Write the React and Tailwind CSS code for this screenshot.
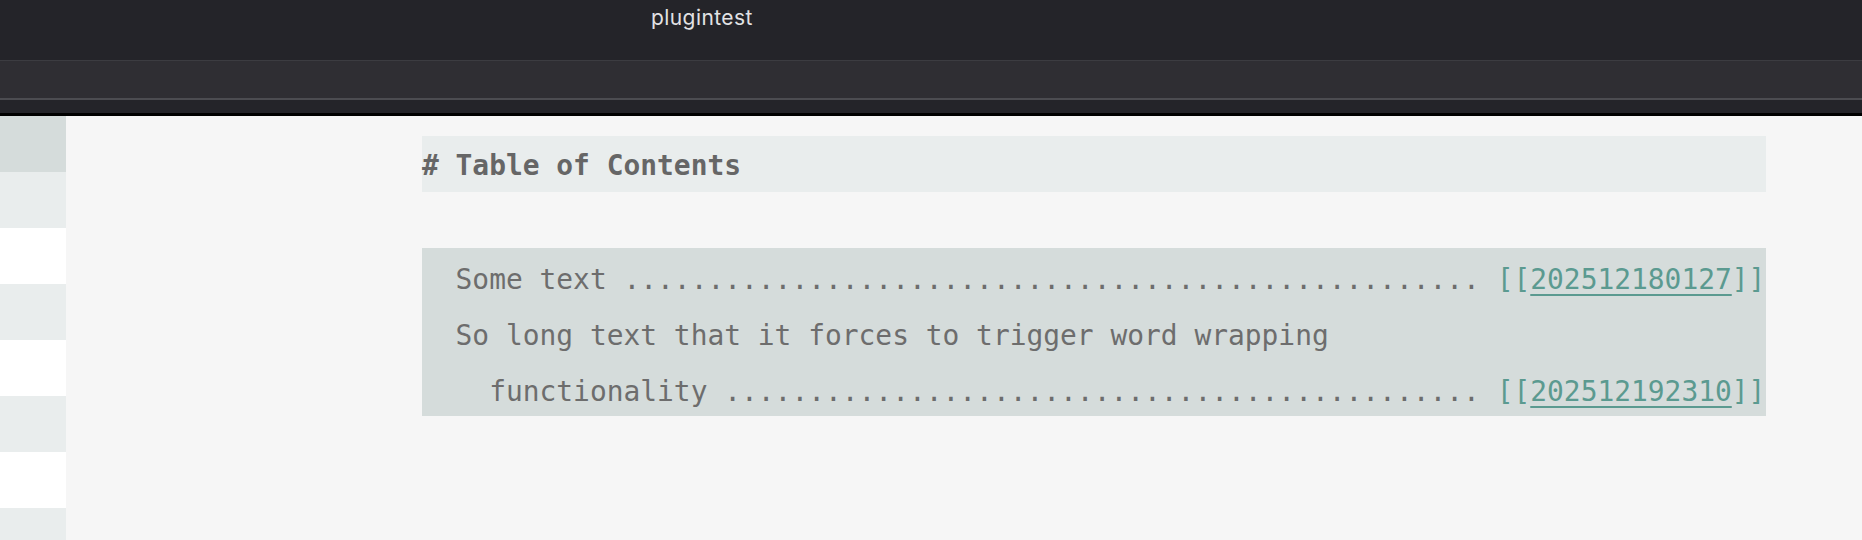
import React from "react";

const mono = { fontFamily: '"DejaVu Sans Mono", "Liberation Mono", monospace' };

function Link({ id }) {
  return (
    <span className="text-[#5b9a90]">
      [[<span className="underline decoration-2 underline-offset-[5px]">{id}</span>]]
    </span>
  );
}

export default function App() {
  const stripes = ["bg-[#d5dcdb]", "bg-[#e9eded]", "bg-white", "bg-[#e9eded]", "bg-white", "bg-[#e9eded]", "bg-white", "bg-[#e9eded]"];
  return (
    <div className="h-[540px] w-[1862px] overflow-hidden flex flex-col bg-[#f6f6f6]">
      <div className="h-[60px] shrink-0 bg-[#242429] pl-[651px] pt-[2px] text-[21px] tracking-[0.02em] text-[#e2e2e4]" style={{ fontFamily: '"Inter", "Noto Sans", sans-serif' }}>
        plugintest
      </div>
      <div className="h-px shrink-0 bg-[#3c3c41]" />
      <div className="h-[37px] shrink-0 bg-[#2f2e33]" />
      <div className="h-[2px] shrink-0 bg-[#4c4c51]" />
      <div className="h-[13px] shrink-0 bg-[#242429]" />
      <div className="h-[3px] shrink-0 bg-black" />
      <div className="flex flex-1 min-h-0">
        <div className="w-[66px] shrink-0 flex flex-col">
          {stripes.map((c, i) => (
            <div key={i} className={`h-[56px] shrink-0 ${c}`} />
          ))}
        </div>
        <div className="flex-1 pl-[356px] pt-[20px]" style={mono}>
          <div className="w-[1344px] h-[56px] pt-[2px] bg-[#e9eded] leading-[56px] text-[27.9px] font-bold text-[#666666] whitespace-pre">
            # Table of Contents
          </div>
          <div className="h-[56px]" />
          <div className="w-[1344px] bg-[#d5dcdb] text-[27.9px] leading-[56px] text-[#6d6d6d] whitespace-pre">
            <div className="h-[56px] pt-[4px]">
              {"  Some text " + ".".repeat(51) + " "}
              <Link id="202512180127" />
            </div>
            <div className="h-[56px] pt-[4px]">{"  So long text that it forces to trigger word wrapping"}</div>
            <div className="h-[56px] pt-[4px]">
              {"    functionality " + ".".repeat(45) + " "}
              <Link id="202512192310" />
            </div>
          </div>
        </div>
      </div>
    </div>
  );
}
